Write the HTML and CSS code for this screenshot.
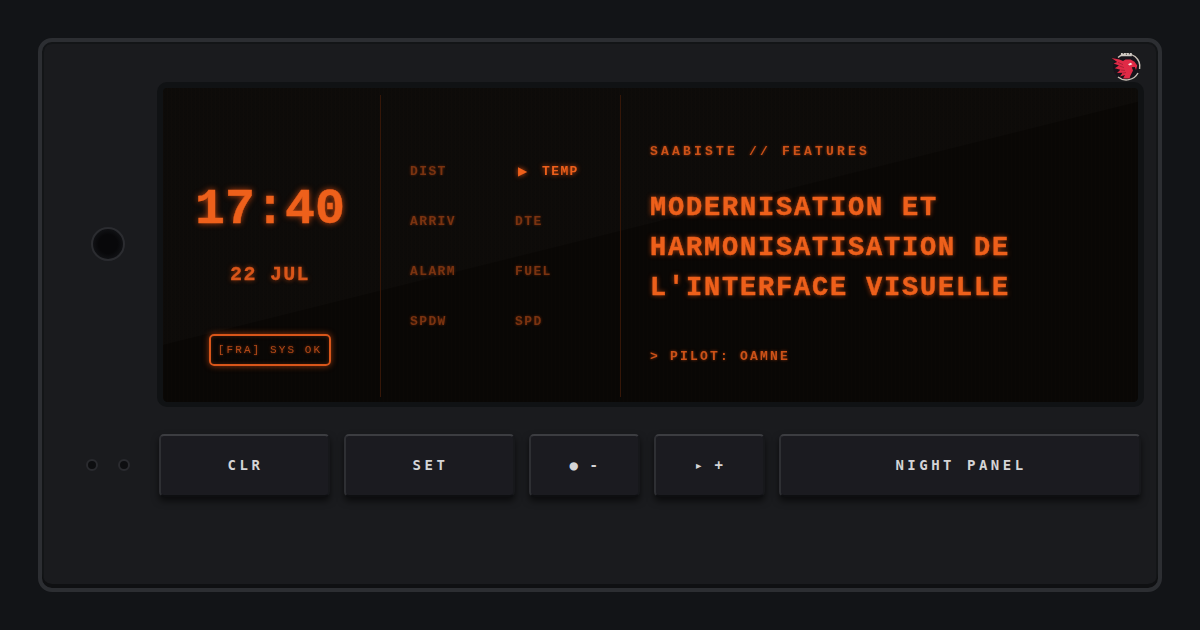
FILE: index.html
```html
<!DOCTYPE html>
<html lang="en">
<head>
    <meta charset="UTF-8">
    <title>Saabiste Features</title>
    <link rel="stylesheet" href="styles.css">
</head>
<body>
    <div class="panel">
        <svg class="logo" viewBox="0 0 32 32" aria-hidden="true">
            <circle cx="16.5" cy="16.5" r="13.5" fill="#17131a"/>
            <path d="M8 7.5A13.3 13.3 0 0 1 25 6.5A13.3 13.3 0 0 1 29.6 19M28 23A13.3 13.3 0 0 1 8 27" fill="none" stroke="#c9c0b6" stroke-width="1.4"/>
            <path d="M11 3h1.8v2h1.2v-2h1.8v2h1.2v-2h1.8v2h1.2v-2h1.8v3.2h-11z" fill="#cfcac4"/>
            <path d="M1.6 8 9.5 9.6 13 11 15.5 9.6 20.5 9.4 24.5 11.8 27.2 15.5 26 20 24.8 17 21.8 17.2 23 20.5 20.5 25.5 19.5 28.4 13 28.4 15 25 10 26.6 12.6 22.8 7 23 10.4 19.8 4.8 18.2 9 15.6 3.6 13.4 7.2 12z" fill="#e02a46"/>
            <path d="M8 12.4 13 14.6M9.4 16 14 17.6M10.8 20 15 20.4M13 23 16 22.6" fill="none" stroke="#8a1a2c" stroke-width="0.6"/>
            <path d="M18 14.2 20.8 12.8 22.4 14.2 19.6 15.4z" fill="#f7e7e4"/>
        </svg>

        <div class="side">
            <div class="knob"></div>
            <div class="leds">
                <span class="led"></span>
                <span class="led"></span>
            </div>
        </div>

        <div class="main">
            <div class="screen">
                <section class="col-clock">
                    <div class="clock">17:40</div>
                    <div class="date">22 JUL</div>
                    <div class="status">[FRA] SYS OK</div>
                </section>
                <section class="col-menu">
                    <span class="item">DIST</span>
                    <span class="item active"><span class="arrow">▶</span>TEMP</span>
                    <span class="item">ARRIV</span>
                    <span class="item">DTE</span>
                    <span class="item">ALARM</span>
                    <span class="item">FUEL</span>
                    <span class="item">SPDW</span>
                    <span class="item">SPD</span>
                </section>
                <section class="col-text">
                    <div class="kicker">SAABISTE // FEATURES</div>
                    <h1>MODERNISATION ET<br>HARMONISATISATION DE<br>L'INTERFACE VISUELLE</h1>
                    <div class="pilot">&gt; PILOT: OAMNE</div>
                </section>
            </div>

            <div class="keys">
                <button>CLR</button>
                <button>SET</button>
                <button class="sym">● -</button>
                <button class="sym">▸ +</button>
                <button>NIGHT PANEL</button>
            </div>
        </div>
    </div>
</body>
</html>
```

FILE: styles.css
```css
* {
    box-sizing: border-box;
}
body {
    margin: 0;
    width: 1200px;
    height: 630px;
    padding: 38px;
    overflow: hidden;
    background-color: #121417;
    font-family: "Liberation Mono", monospace;
}
.panel {
    position: relative;
    display: flex;
    height: 554px;
    padding: 40px 17px 0 14px;
    background: #1a1b1e;
    border: 4px solid #2c2e32;
    border-radius: 14px;
    box-shadow: inset 0 -4px 0 #0f1012, inset 0 2px 0 #131517, inset 2px 0 0 #131517, inset -2px 0 0 #131517;
}
.logo {
    position: absolute;
    top: 8px;
    right: 16px;
    width: 32px;
    height: 32px;
}

/* left strip with knob and leds */
.side {
    width: 103px;
    flex: none;
    padding-top: 145px;
    display: flex;
    flex-direction: column;
    align-items: center;
}
.knob {
    width: 34px;
    height: 34px;
    border-radius: 50%;
    background: radial-gradient(circle, #08080a 0 45%, #101114 70%);
    border: 2px solid #2b2c30;
}
.leds {
    display: flex;
    gap: 20px;
    margin-top: 198px;
}
.led {
    width: 12px;
    height: 12px;
    border-radius: 50%;
    background: #0d0e10;
    border: 2px solid #2a2b2f;
}

.main {
    flex: 1;
}

/* screen */
.screen {
    position: relative;
    display: grid;
    grid-template-columns: 218px 240px 1fr;
    height: 325px;
    margin: 0 -3px 0 -2px;
    background: #090705;
    border: 6px solid #101214;
    border-bottom-width: 5px;
    border-radius: 10px;
    overflow: hidden;
    color: #ee601b;
}
.screen::before {
    content: "";
    position: absolute;
    inset: 0;
    background:
        repeating-linear-gradient(90deg, rgba(255, 120, 40, 0.008) 0 1px, transparent 1px 4px),
        linear-gradient(166deg, rgba(255, 255, 255, 0.014) 0 46%, transparent 46.2%);
    pointer-events: none;
}
.screen section {
    filter: blur(0.35px);
}
.col-clock, .col-menu {
    margin: 7px 0 5px;
    border-right: 1px solid #361708;
}
.col-clock {
    display: flex;
    flex-direction: column;
    align-items: center;
    padding: 90px 3px 0 0;
}
.clock {
    font-size: 50px;
    line-height: 50px;
    font-weight: bold;
    -webkit-text-stroke: 0.4px #ee601b;
    text-shadow: 0 0 6px rgba(255, 90, 20, 0.75);
}
.date {
    margin-top: 28px;
    font-size: 20px;
    line-height: 24px;
    font-weight: bold;
    letter-spacing: 1.3px;
    color: #d9561a;
    -webkit-text-stroke: 0.3px #d9561a;
    text-shadow: 0 0 5px rgba(255, 90, 20, 0.6);
}
.status {
    width: 122px;
    height: 32px;
    margin-top: 47px;
    border: 2px solid #d9561a;
    border-radius: 5px;
    font-size: 11px;
    line-height: 28px;
    letter-spacing: 2.1px;
    text-align: center;
    color: #b34a18;
    box-shadow: 0 0 6px rgba(255, 90, 20, 0.55), inset 0 0 4px rgba(255, 90, 20, 0.25);
    text-shadow: 0 0 3px rgba(255, 90, 20, 0.5);
}
.col-menu {
    display: grid;
    grid-template-columns: 105px 1fr;
    grid-auto-rows: 50px;
    align-content: start;
    padding: 51px 0 0 29px;
}
.item {
    align-self: center;
    font-size: 13px;
    letter-spacing: 1.4px;
    font-weight: bold;
    color: #7a3310;
    text-shadow: 0 0 3px rgba(255, 90, 20, 0.35);
}
.item.active {
    color: #ee601b;
    text-shadow: 0 0 5px rgba(255, 90, 20, 0.8);
}
.arrow {
    display: inline-block;
    width: 27px;
    padding-left: 3px;
    font-family: "DejaVu Sans", sans-serif;
    font-size: 12px;
}
.col-text {
    padding: 56px 0 0 29px;
}
.kicker, .pilot {
    font-size: 13px;
    line-height: 16px;
    font-weight: bold;
    color: #cc5218;
    text-shadow: 0 0 3px rgba(255, 90, 20, 0.55);
}
.kicker {
    letter-spacing: 3.2px;
}
.pilot {
    margin-top: 41px;
    letter-spacing: 2.2px;
}
h1 {
    margin: 28px 0 0;
    font-size: 27px;
    line-height: 40px;
    font-weight: bold;
    letter-spacing: 1.8px;
    color: #ee601b;
    -webkit-text-stroke: 0.4px #ee601b;
    text-shadow: 0 0 5px rgba(255, 90, 20, 0.7);
}

/* hardware keys */
.keys {
    display: grid;
    grid-template-columns: 171px 171px 111px 111px 1fr;
    gap: 14px;
    margin-top: 27px;
}
button {
    height: 63px;
    padding: 0 0 1px 2px;
    background: #1b1b20;
    border: 2px solid #2e2f33;
    border-top-color: #3c3d41;
    border-right-color: #17181b;
    border-bottom-color: #0e0f11;
    border-radius: 5px;
    box-shadow: 0 4px 7px rgba(0, 0, 0, 0.6);
    font-family: "DejaVu Sans Mono", monospace;
    font-size: 14px;
    font-weight: bold;
    letter-spacing: 3.5px;
    color: #d4d4d6;
}
.sym {
    word-spacing: -4px;
}
```
